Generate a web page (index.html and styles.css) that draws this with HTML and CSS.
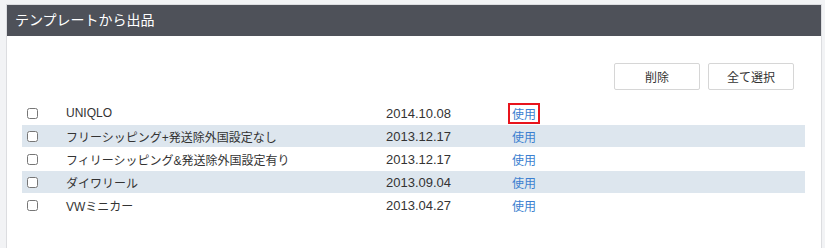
FILE: index.html
```html
<!DOCTYPE html>
<html lang="ja">
<head>
    <meta charset="UTF-8">
    <title>テンプレートから出品</title>
    <link rel="stylesheet" href="styles.css">
</head>
<body>
    <div class="panel">
        <div class="panel-head">テンプレートから出品</div>
        <div class="panel-body">
            <div class="actions">
                <button type="button">削除</button>
                <button type="button">全て選択</button>
            </div>
            <table class="list">
                <tr>
                    <td class="chk"><input type="checkbox"></td>
                    <td class="name">UNIQLO</td>
                    <td class="date">2014.10.08</td>
                    <td class="use"><a href="#" class="marked">使用</a></td>
                </tr>
                <tr>
                    <td class="chk"><input type="checkbox"></td>
                    <td class="name">フリーシッピング+発送除外国設定なし</td>
                    <td class="date">2013.12.17</td>
                    <td class="use"><a href="#">使用</a></td>
                </tr>
                <tr>
                    <td class="chk"><input type="checkbox"></td>
                    <td class="name">フィリーシッピング&amp;発送除外国設定有り</td>
                    <td class="date">2013.12.17</td>
                    <td class="use"><a href="#">使用</a></td>
                </tr>
                <tr>
                    <td class="chk"><input type="checkbox"></td>
                    <td class="name">ダイワリール</td>
                    <td class="date">2013.09.04</td>
                    <td class="use"><a href="#">使用</a></td>
                </tr>
                <tr>
                    <td class="chk"><input type="checkbox"></td>
                    <td class="name">VWミニカー</td>
                    <td class="date">2013.04.27</td>
                    <td class="use"><a href="#">使用</a></td>
                </tr>
            </table>
        </div>
    </div>
</body>
</html>
```

FILE: styles.css
```css
body { margin: 0; background: #f2f3f5; font-family: 'Liberation Sans', 'Noto Sans CJK JP', Arial, sans-serif; font-size: 12px; color: #333; }
.panel { margin: 4px 3px 0 6px; width: 814px; background: #fff; border: 1px solid #dcdde0; }
.panel-head { background: #4e5159; color: #fff; font-size: 14px; height: 31px; line-height: 30px; padding-left: 8px; }
.panel-body { padding: 27px 16px 35px 15px; }
.actions { display: flex; justify-content: flex-end; gap: 8px; padding-right: 11px; margin-bottom: 11px; }
.actions button { width: 86px; height: 27px; background: #fff; border: 1px solid #d6d6d6; border-radius: 2px; font-family: inherit; font-size: 12px; color: #333; }
.list { width: 100%; border-collapse: collapse; }
.list td { height: 22px; padding: 0; border-top: 1px solid #fff; }
.list tr:nth-child(even) td { background: #dde6ee; }
.chk { width: 44px; }
.chk input { margin: 0 0 0 5px; width: 11px; height: 11px; vertical-align: middle; }
.name { width: 320px; }
.date { width: 122px; font-size: 13px; }
.use a { color: #3b7fd0; text-decoration: none; display: inline-block; padding: 0 2px; border: 2px solid transparent; }
.use a.marked { border-color: #e8141c; }
```
